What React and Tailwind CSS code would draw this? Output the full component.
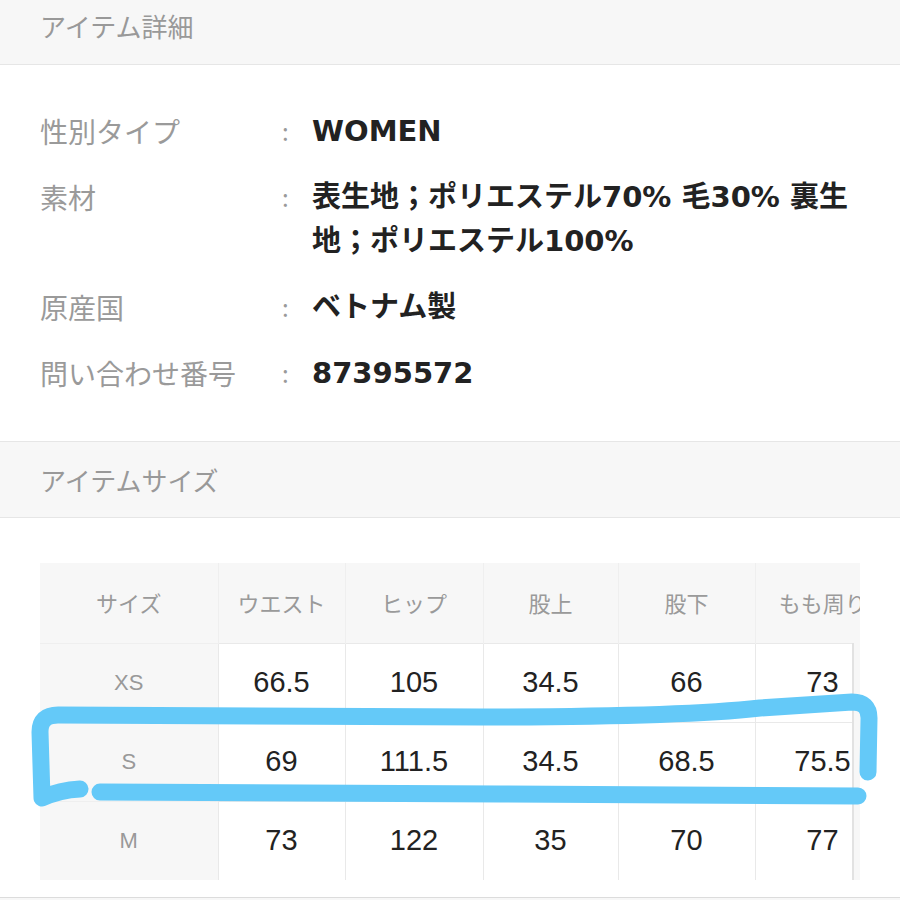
import React from 'react';

const jp = { fontFamily: '"Noto Sans CJK JP", "Noto Sans", sans-serif' };
const val = { fontFamily: '"DejaVu Sans", "Noto Sans CJK JP", sans-serif' };
const num = { fontFamily: '"Liberation Sans", "Noto Sans CJK JP", sans-serif' };

const details = [
    { label: '性別タイプ', value: ['WOMEN'] },
    { label: '素材', value: ['表生地；ポリエステル70% 毛30% 裏生', '地；ポリエステル100%'] },
    { label: '原産国', value: ['ベトナム製'] },
    { label: '問い合わせ番号', value: ['87395572'] },
];

const columns = [
    { name: 'サイズ', w: 'w-[178px]' },
    { name: 'ウエスト', w: 'w-[127px]' },
    { name: 'ヒップ', w: 'w-[138px]' },
    { name: '股上', w: 'w-[135px]' },
    { name: '股下', w: 'w-[137px]' },
    { name: 'もも周り', w: 'w-[135px]' },
];

const sizes = [
    ['XS', '66.5', '105', '34.5', '66', '73'],
    ['S', '69', '111.5', '34.5', '68.5', '75.5'],
    ['M', '73', '122', '35', '70', '77'],
];

const SectionHeader = ({ title, className }) => (
    <div className={`bg-[#f7f7f7] border-[#e6e6e6] flex items-center px-[40px] ${className}`}>
        <span className="text-[26px] text-[#999] leading-none" style={jp}>{title}</span>
    </div>
);

const App = () => {
    return (
        <div className="relative w-[900px] h-[900px] overflow-hidden bg-white" style={jp}>
            <SectionHeader title="アイテム詳細" className="h-[65px] border-b pb-[12px]" />

            {/* Details */}
            <div className="h-[376px] pt-[44px] px-[40px] flex flex-col gap-[22px]">
                {details.map((d) => (
                    <div key={d.label} className="flex text-[28px] leading-[44px]">
                        <div className="w-[242px] text-[#9a9a9a] whitespace-nowrap">{d.label}</div>
                        <div className="w-[30px] text-[#9a9a9a] text-[24px]">:</div>
                        <div className="flex-1 text-[29px] text-[#222] font-bold whitespace-nowrap" style={val}>
                            {d.value.map((line) => (
                                <div key={line}>{line}</div>
                            ))}
                        </div>
                    </div>
                ))}
            </div>

            <SectionHeader title="アイテムサイズ" className="h-[77px] border-t border-b" />

            {/* Size table */}
            <div className="pt-[45px] px-[40px] h-[379px]">
                <div className="relative w-[820px] h-[317px] overflow-hidden bg-[#f7f7f7]">
                    <table className="border-collapse table-fixed w-[850px]">
                        <thead>
                            <tr className="h-[80px]">
                                {columns.map((c, i) => (
                                    <th
                                        key={c.name}
                                        className={`${c.w} font-normal text-[22px] text-[#9a9a9a] whitespace-nowrap ${i > 0 ? 'border-l border-[#efefef]' : ''}`}
                                    >
                                        {c.name}
                                    </th>
                                ))}
                            </tr>
                        </thead>
                        <tbody>
                            {sizes.map((row) => (
                                <tr key={row[0]} className="h-[79px]">
                                    {row.map((v, i) =>
                                        i === 0 ? (
                                            <td key={i} className="text-center text-[22px] text-[#999] border-t border-[#efefef]" style={num}>
                                                {v}
                                            </td>
                                        ) : (
                                            <td key={i} className="text-center text-[29px] text-[#222] bg-white border border-[#e9e9e9]" style={num}>
                                                {v}
                                            </td>
                                        )
                                    )}
                                </tr>
                            ))}
                        </tbody>
                    </table>
                    <div className="absolute right-0 top-[80px] bottom-0 w-[8px] bg-[#f7f7f7] border-l-2 border-[#e2e2e2]"></div>
                </div>
            </div>

            <div className="h-[4px] border-t border-[#dcdcdc] bg-[#f7f7f7]"></div>

            {/* Highlighter scribble */}
            <svg className="absolute inset-0 pointer-events-none" width="900" height="900" viewBox="0 0 900 900">
                <g fill="none" stroke="#64c9f8" strokeWidth="17" strokeLinecap="round" strokeLinejoin="round">
                    <path d="M 80 789 Q 60 790 42 798 L 40 732 Q 40 715 58 715 L 480 717 Q 680 717 760 708 L 852 702 Q 869 702 869 718 L 868 772" />
                    <path d="M 100 792 L 500 794 L 858 796" />
                </g>
            </svg>
        </div>
    );
};

export default App;
